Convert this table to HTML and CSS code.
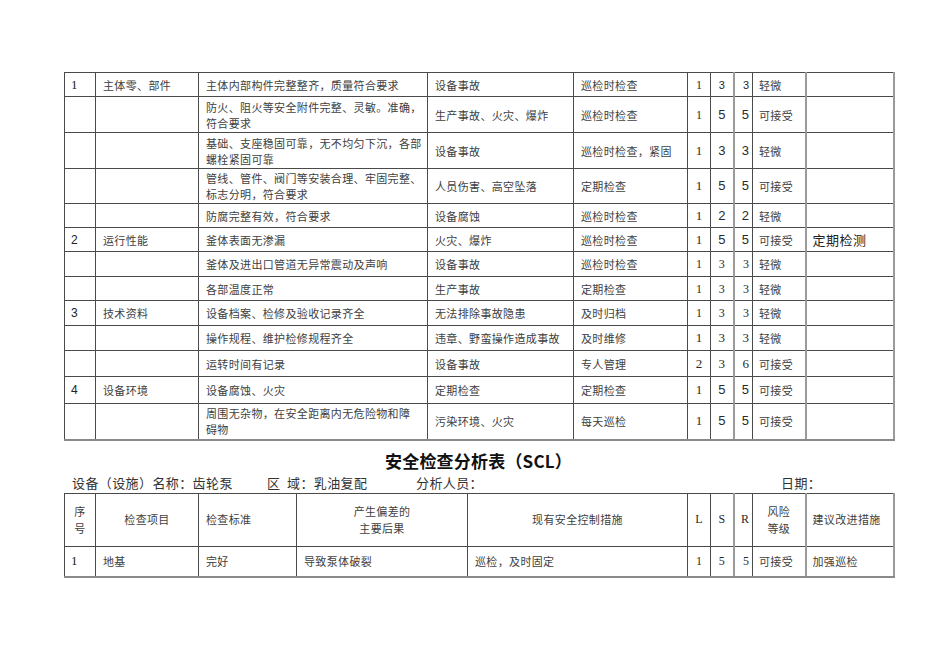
FILE: index.html
```html
<!DOCTYPE html>
<html lang="zh">
<head>
<meta charset="utf-8">
<link rel="stylesheet" href="styles.css">
</head>
<body>
<div class="page">
  <table class="grid t1">
    <colgroup>
      <col class="c-no"><col class="c-item"><col class="c-std"><col class="c-res"><col class="c-ctl">
      <col class="c-l"><col class="c-s"><col class="c-r"><col class="c-lvl"><col class="c-sug">
    </colgroup>
    <tr class="h24"><td class="no serif">1</td><td>主体零、部件</td><td>主体内部构件完整整齐，质量符合要求</td><td>设备事故</td><td>巡检时检查</td><td class="n sm">1</td><td class="n sans">3</td><td class="n sans rl">3</td><td class="lvl">轻微</td><td class="sug"></td></tr>
    <tr class="h36"><td></td><td></td><td>防火、阻火等安全附件完整、灵敏。准确，<br>符合要求</td><td>生产事故、火灾、爆炸</td><td>巡检时检查</td><td class="n sm">1</td><td class="n sans big">5</td><td class="n sans big rl">5</td><td class="lvl">可接受</td><td class="sug"></td></tr>
    <tr class="h36"><td></td><td></td><td>基础、支座稳固可靠，无不均匀下沉，各部<br>螺栓紧固可靠</td><td>设备事故</td><td>巡检时检查，紧固</td><td class="n big">1</td><td class="n sans big">3</td><td class="n sans big rl">3</td><td class="lvl">轻微</td><td class="sug"></td></tr>
    <tr class="h35"><td></td><td></td><td>管线、管件、阀门等安装合理、牢固完整、<br>标志分明，符合要求</td><td>人员伤害、高空坠落</td><td>定期检查</td><td class="n big">1</td><td class="n sans big">5</td><td class="n sans big rl">5</td><td class="lvl">可接受</td><td class="sug"></td></tr>
    <tr class="h24"><td></td><td></td><td>防腐完整有效，符合要求</td><td>设备腐蚀</td><td>巡检时检查</td><td class="n big">1</td><td class="n sans big">2</td><td class="n sans big rl">2</td><td class="lvl">轻微</td><td class="sug"></td></tr>
    <tr class="h24"><td class="no sans">2</td><td>运行性能</td><td>釜体表面无渗漏</td><td>火灾、爆炸</td><td>巡检时检查</td><td class="n big">1</td><td class="n sans big">5</td><td class="n sans big rl">5</td><td class="lvl">可接受</td><td class="sug big-txt">定期检测</td></tr>
    <tr class="h25"><td></td><td></td><td>釜体及进出口管道无异常震动及声响</td><td>设备事故</td><td>巡检时检查</td><td class="n sm">1</td><td class="n sm">3</td><td class="n sm rl">3</td><td class="lvl">轻微</td><td class="sug"></td></tr>
    <tr class="h24"><td></td><td></td><td>各部温度正常</td><td>生产事故</td><td>定期检查</td><td class="n sm">1</td><td class="n sm">3</td><td class="n sm rl">3</td><td class="lvl">轻微</td><td class="sug"></td></tr>
    <tr class="h25"><td class="no sans">3</td><td>技术资料</td><td>设备档案、检修及验收记录齐全</td><td>无法排除事故隐患</td><td>及时归档</td><td class="n sm">1</td><td class="n sm">3</td><td class="n sm rl">3</td><td class="lvl">轻微</td><td class="sug"></td></tr>
    <tr class="h25"><td></td><td></td><td>操作规程、维护检修规程齐全</td><td>违章、野蛮操作造成事故</td><td>及时维修</td><td class="n big">1</td><td class="n big">3</td><td class="n big rl">3</td><td class="lvl">轻微</td><td class="sug"></td></tr>
    <tr class="h26"><td></td><td></td><td>运转时间有记录</td><td>设备事故</td><td>专人管理</td><td class="n big">2</td><td class="n big">3</td><td class="n big rl">6</td><td class="lvl">可接受</td><td class="sug"></td></tr>
    <tr class="h27"><td class="no sans">4</td><td>设备环境</td><td>设备腐蚀、火灾</td><td>定期检查</td><td>定期检查</td><td class="n big">1</td><td class="n sans big">5</td><td class="n sans big rl">5</td><td class="lvl">可接受</td><td class="sug"></td></tr>
    <tr class="h36 last"><td></td><td></td><td>周围无杂物，在安全距离内无危险物和障<br>碍物</td><td>污染环境、火灾</td><td>每天巡检</td><td class="n big">1</td><td class="n sans big">5</td><td class="n sans big rl">5</td><td class="lvl">可接受</td><td class="sug"></td></tr>
  </table>

  <h1 class="title">安全检查分析表（SCL）</h1>

  <div class="meta">
    <span class="m-name">设备（设施）名称：齿轮泵</span>
    <span class="m-area">区&nbsp;&nbsp;域：乳油复配</span>
    <span class="m-who">分析人员：</span>
    <span class="m-date">日期：</span>
  </div>

  <table class="grid t2">
    <colgroup>
      <col class="c-no"><col class="c-item"><col class="d-std"><col class="d-res"><col class="d-ctl">
      <col class="c-l"><col class="c-s"><col class="c-r"><col class="c-lvl"><col class="c-sug">
    </colgroup>
    <tr class="h53 head">
      <td class="ctr">序<br>号</td>
      <td class="ctr">检查项目</td>
      <td>检查标准</td>
      <td class="ctr">产生偏差的<br>主要后果</td>
      <td class="ctr">现有安全控制措施</td>
      <td class="n sm">L</td>
      <td class="n sm">S</td>
      <td class="n sm rl">R</td>
      <td class="ctr">风险<br>等级</td>
      <td class="sug">建议改进措施</td>
    </tr>
    <tr class="h31 last">
      <td class="no serif">1</td>
      <td>地基</td>
      <td>完好</td>
      <td>导致泵体破裂</td>
      <td>巡检，及时固定</td>
      <td class="n sm">1</td>
      <td class="n sm">5</td>
      <td class="n sm rl">5</td>
      <td class="lvl">可接受</td>
      <td class="sug">加强巡检</td>
    </tr>
  </table>
</div>
</body>
</html>
```

FILE: styles.css
```css
html, body {
  margin: 0;
  padding: 0;
  background: #ffffff;
}

body {
  font-family: "Noto Sans CJK SC", "Noto Sans", sans-serif;
  color: #404040;
  font-size: 11px;
}

.page {
  padding: 72px 0 0 64px;
  width: 829px;
}

.grid {
  border-collapse: collapse;
  table-layout: fixed;
  width: 829px;
  border-right: 2px solid #9a9a9a;
}

.grid td {
  border: 1px solid #4a4a4a;
  padding: 0 0 0 7px;
  vertical-align: middle;
  font-size: 11px;
  letter-spacing: 0.35px;
  line-height: 16px;
  overflow: hidden;
  white-space: nowrap;
}

.grid tr.last td {
  border-bottom: 2px solid #8a8a8a;
}

.c-no { width: 31px; }
.c-item { width: 103px; }
.c-std { width: 229px; }
.c-res { width: 146px; }
.c-ctl { width: 114px; }
.c-l { width: 23px; }
.c-s { width: 23px; }
.c-r { width: 19px; }
.c-lvl { width: 53px; }
.c-sug { width: 88px; }

.d-std { width: 98px; }
.d-res { width: 171px; }
.d-ctl { width: 220px; }

.h24 { height: 24px; }
.h25 { height: 25px; }
.h26 { height: 26px; }
.h27 { height: 27px; }
.h35 { height: 35px; }
.h36 { height: 36px; }
.h53 { height: 53px; }
.h31 { height: 31px; }

.grid td.no {
  padding-left: 6px;
  font-size: 13px;
  color: #222;
}

.serif {
  font-family: "Liberation Serif", "DejaVu Serif", serif;
}

.sans {
  font-family: "Liberation Sans", "DejaVu Sans", sans-serif;
}

.grid td.no.sans {
  font-size: 12px;
}

.grid td.n {
  padding: 0;
  text-align: center;
  font-family: "Liberation Serif", serif;
  letter-spacing: 0;
  color: #2a2a2a;
}

.grid td.n.sans {
  font-family: "Liberation Sans", sans-serif;
}

.grid td.n.sm {
  font-size: 12px;
}

.grid td.n.big {
  font-size: 13px;
}

.grid td.rl {
  border-left: 2px solid #9a9a9a;
  text-align: right;
  padding-right: 3px;
}

.grid td.sug {
  border-left: 2px solid #9a9a9a;
  padding-left: 6px;
}

.grid td.big-txt {
  font-size: 13px;
  letter-spacing: 0.5px;
  color: #222;
}

.grid td.lvl {
  padding-left: 6px;
}

.grid td.ctr {
  text-align: center;
  padding: 0;
}

.head td {
  line-height: 17px;
}

.title {
  margin: 8px 0 0 0;
  text-align: center;
  font-size: 17px;
  font-weight: bold;
  line-height: 24px;
  color: #111;
  letter-spacing: 0.2px;
}

.meta {
  display: flex;
  align-items: baseline;
  padding-left: 8px;
  height: 20px;
  line-height: 20px;
  font-size: 13px;
  letter-spacing: 0.4px;
  color: #333;
}

.m-name { width: 195px; }
.m-area { width: 149px; }
.m-who { width: 365px; }
```
